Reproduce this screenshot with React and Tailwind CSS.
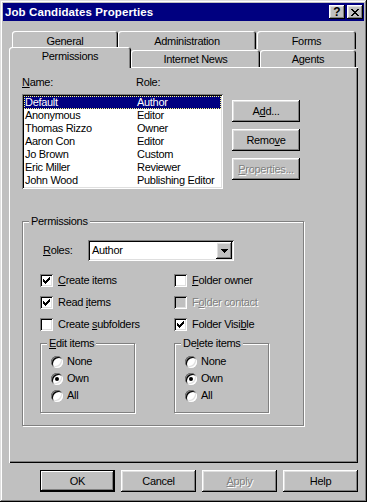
import React from 'react'

const raised = 'shadow-[inset_-1px_-1px_#000,inset_1px_1px_#fff,inset_-2px_-2px_#808080,inset_2px_2px_#dfdfdf]'
const sunken = 'shadow-[inset_1px_1px_#808080,inset_-1px_-1px_#fff,inset_2px_2px_#000,inset_-2px_-2px_#dfdfdf]'
const etched = 'border border-[#808080] shadow-[inset_1px_1px_#fff,1px_1px_#fff]'
const tab = 'rounded-t-[3px] bg-[#c0c0c0] text-center shadow-[inset_1px_1px_#fff,inset_-1px_0_#000,inset_-2px_0_#808080]'
const dim = 'text-[#808080] [text-shadow:1px_1px_0_#fff]'

const checkPx = [
  [6, 0], [5, 1], [6, 1], [0, 2], [4, 2], [5, 2], [6, 2],
  [0, 3], [1, 3], [3, 3], [4, 3], [5, 3],
  [0, 4], [1, 4], [2, 4], [3, 4], [4, 4],
  [1, 5], [2, 5], [3, 5], [2, 6],
]

const closePx = [
  [0, 0], [1, 0], [6, 0], [7, 0],
  [1, 1], [2, 1], [5, 1], [6, 1],
  [2, 2], [3, 2], [4, 2], [5, 2],
  [3, 3], [4, 3],
  [2, 4], [3, 4], [4, 4], [5, 4],
  [1, 5], [2, 5], [5, 5], [6, 5],
  [0, 6], [1, 6], [6, 6], [7, 6],
]

const people = [
  ['Default', 'Author'],
  ['Anonymous', 'Editor'],
  ['Thomas Rizzo', 'Owner'],
  ['Aaron Con', 'Editor'],
  ['Jo Brown', 'Custom'],
  ['Eric Miller', 'Reviewer'],
  ['John Wood', 'Publishing Editor'],
]

const Pixels = ({ px, w, h, color = '#000' }) => (
  <svg width={w} height={h} viewBox={`0 0 ${w} ${h}`} shapeRendering="crispEdges">
    {px.map(([x, y]) => (
      <rect key={`${x}-${y}`} x={x} y={y} width="1" height="1" fill={color} />
    ))}
  </svg>
)

const Checkbox = ({ checked, disabled, children }) => (
  <div className="flex items-center h-[13px]">
    <div className={`w-[13px] h-[13px] ${disabled ? 'bg-[#c0c0c0]' : 'bg-white'} ${sunken} flex items-center justify-center`}>
      {checked && <Pixels px={checkPx} w={7} h={7} />}
    </div>
    <span className={`ml-[5px] ${disabled ? dim : ''}`}>{children}</span>
  </div>
)

const Radio = ({ checked, children }) => (
  <div className="flex items-center h-[13px]">
    <div className="w-[12px] h-[12px] rounded-full bg-white shadow-[inset_1px_1px_#808080,inset_-1px_-1px_#fff,inset_2px_2px_#000,inset_-2px_-2px_#dfdfdf] flex items-center justify-center">
      {checked && <div className="w-[4px] h-[4px] rounded-full bg-black" />}
    </div>
    <span className="ml-[4px]">{children}</span>
  </div>
)

const RadioGroup = ({ title }) => (
  <div className={`w-[95px] h-[70px] ${etched}`}>
    <div className="-mt-[7px] ml-[6px] px-[2px] w-fit bg-[#c0c0c0]">{title}</div>
    <div className="mt-[5px] pl-[10px] flex flex-col gap-[4px]">
      <Radio>None</Radio>
      <Radio checked>Own</Radio>
      <Radio>All</Radio>
    </div>
  </div>
)

export default function App() {
  return (
    <div className="w-[367px] h-[502px] bg-[#c0c0c0] p-[3px] text-black text-[11px] leading-[13px] tracking-[-0.3px] font-['Liberation_Sans',Arial,sans-serif] shadow-[inset_-1px_-1px_#000,inset_1px_1px_#dfdfdf,inset_-2px_-2px_#808080,inset_2px_2px_#fff]">
      {/* title bar */}
      <div className="h-[18px] bg-[#000080] flex items-center justify-between pl-[2px] pr-[1px]">
        <span className="text-white font-bold text-[11.5px] tracking-[0.1px]">Job Candidates Properties</span>
        <div className="flex gap-[2px]">
          <div className={`w-[16px] h-[14px] bg-[#c0c0c0] ${raised} flex items-center justify-center font-bold text-[12px] tracking-normal`}>?</div>
          <div className={`w-[16px] h-[14px] bg-[#c0c0c0] ${raised} flex items-center justify-center`}>
            <Pixels px={closePx} w={8} h={7} />
          </div>
        </div>
      </div>

      <div className="mt-[10px] pl-[6px]">
        {/* tabs */}
        <div className="flex h-[18px] pl-[3px]">
          <div className={`w-[106px] pt-[4px] ${tab}`}>General</div>
          <div className={`w-[138px] pt-[4px] ${tab}`}>Administration</div>
          <div className={`w-[99px] ml-[1px] pt-[4px] ${tab}`}>Forms</div>
        </div>
        <div className="flex h-[18px] items-end">
          <div className={`relative z-10 w-[122px] h-[21px] -mb-[1px] pt-[3px] ${tab}`}>Permissions</div>
          <div className={`w-[129px] h-[17px] pt-[3px] ${tab}`}>Internet News</div>
          <div className={`w-[96px] h-[17px] pt-[3px] ${tab}`}>Agents</div>
        </div>

        {/* panel */}
        <div className="w-[349px] h-[396px] pl-[13px] pt-[9px] shadow-[inset_1px_1px_#fff,inset_-1px_-1px_#000,inset_-2px_-2px_#808080]">
          <div className="flex">
            <span className="w-[114px]"><u>N</u>ame:</span>
            <span>Role:</span>
          </div>
          <div className="flex items-start mt-[5px]">
            <div className={`w-[201px] h-[95px] bg-white p-[2px] overflow-hidden ${sunken}`}>
              {people.map(([name, role], i) => (
                <div
                  key={name}
                  className={`flex h-[13px] pl-[1px] ${i === 0 ? 'bg-[#000080] text-white outline-1 outline-dotted outline-[#ffff80] -outline-offset-1' : ''}`}
                >
                  <span className="w-[112px]">{name}</span>
                  <span>{role}</span>
                </div>
              ))}
            </div>
            <div className="ml-[9px] mt-[6px] flex flex-col gap-[7px]">
              <div className={`w-[68px] h-[22px] flex items-center justify-center ${raised}`}>A<u>d</u>d...</div>
              <div className={`w-[68px] h-[22px] flex items-center justify-center ${raised}`}>Remo<u>v</u>e</div>
              <div className={`w-[68px] h-[22px] flex items-center justify-center ${raised} ${dim}`}><u>P</u>roperties...</div>
            </div>
          </div>

          {/* permissions group */}
          <div className={`mt-[32px] w-[282px] h-[205px] ${etched}`}>
            <div className="-mt-[7px] ml-[6px] px-[2px] w-fit bg-[#c0c0c0]">Permissions</div>
            <div className="flex items-center mt-[12px] pl-[20px]">
              <span className="w-[45px]"><u>R</u>oles:</span>
              <div className={`w-[146px] h-[21px] bg-white flex items-center justify-between pl-[4px] pr-[2px] ${sunken}`}>
                <span>Author</span>
                <div className={`w-[16px] h-[17px] bg-[#c0c0c0] flex items-center justify-center ${raised}`}>
                  <svg width="7" height="4" viewBox="0 0 7 4" shapeRendering="crispEdges">
                    <path d="M0 0h7v1h-1v1h-1v1h-1v1h-1v-1h-1v-1h-1v-1h-1z" fill="#000" />
                  </svg>
                </div>
              </div>
            </div>
            <div className="mt-[13px] pl-[17px] grid grid-cols-[134px_1fr] gap-y-[9px]">
              <Checkbox checked><u>C</u>reate items</Checkbox>
              <Checkbox><u>F</u>older owner</Checkbox>
              <Checkbox checked>Read <u>i</u>tems</Checkbox>
              <Checkbox disabled>F<u>o</u>lder contact</Checkbox>
              <Checkbox>Create <u>s</u>ubfolders</Checkbox>
              <Checkbox checked>Folder Visi<u>b</u>le</Checkbox>
            </div>
            <div className="mt-[12px] pl-[17px] flex gap-[39px]">
              <RadioGroup title={<><u>E</u>dit items</>} />
              <RadioGroup title={<>De<u>l</u>ete items</>} />
            </div>
          </div>
        </div>

        {/* dialog buttons */}
        <div className="w-[349px] mt-[7px] flex justify-end gap-[6px]">
          <div className="w-[75px] h-[22px] flex items-center justify-center shadow-[inset_0_0_0_1px_#000,inset_-2px_-2px_#000,inset_2px_2px_#fff,inset_-3px_-3px_#808080]">OK</div>
          <div className={`w-[75px] h-[22px] flex items-center justify-center ${raised}`}>Cancel</div>
          <div className={`w-[75px] h-[22px] flex items-center justify-center ${raised} ${dim}`}><u>A</u>pply</div>
          <div className={`w-[75px] h-[22px] flex items-center justify-center ${raised}`}>Help</div>
        </div>
      </div>
    </div>
  )
}
